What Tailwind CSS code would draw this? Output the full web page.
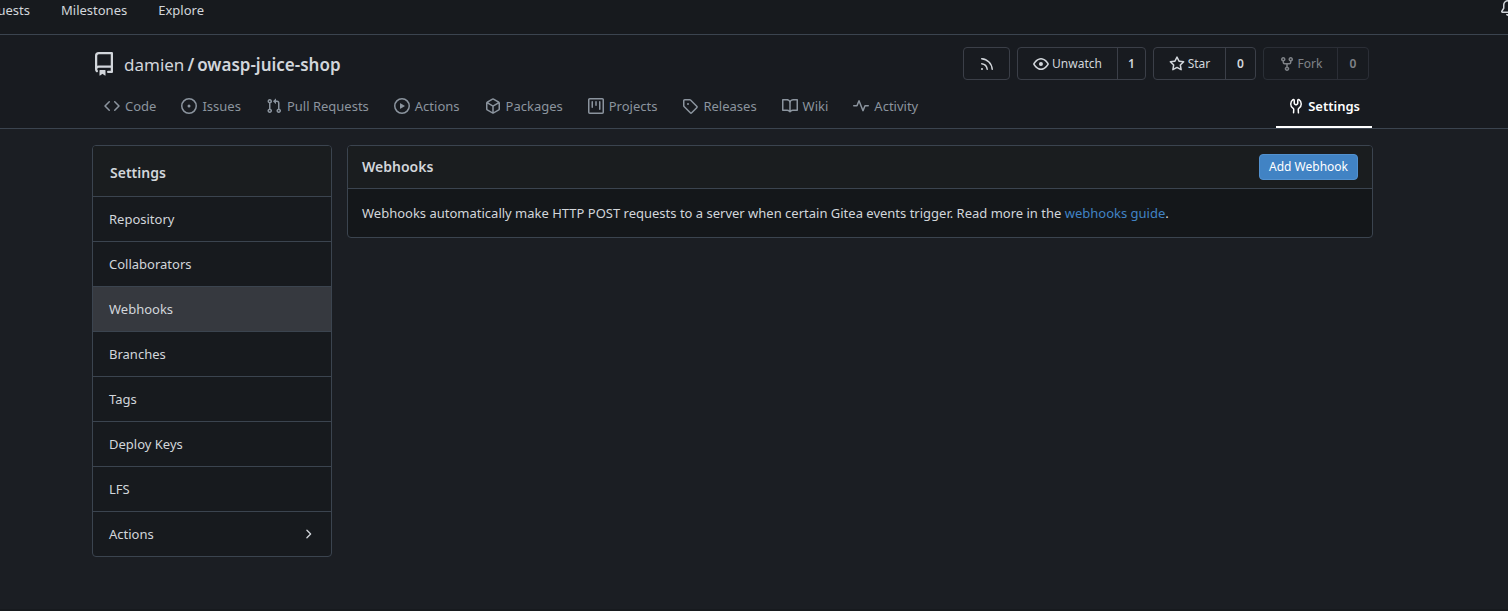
<!DOCTYPE html>
<html lang="en">
<head>
  <meta charset="UTF-8">
  <title>Webhooks - damien/owasp-juice-shop - Gitea</title>
  <meta name="viewport" content="width=device-width, initial-scale=1.0" />
  <script src="https://cdn.jsdelivr.net/npm/@tailwindcss/browser@4"></script>
</head>
<body class="min-h-screen flex flex-col overflow-x-hidden bg-[#1b1e23] text-[#d2d6db] text-[13px] leading-5 font-['Noto_Sans',sans-serif]">

  <!-- Top bar -->
  <nav class="flex justify-between h-[35px] bg-[#171a1e] border-b border-[#3b444f]">
    <div class="flex gap-[31px]">
      <a href="#" class="flex justify-end w-[30px] overflow-hidden whitespace-nowrap">Pull Requests</a>
      <a href="#">Milestones</a>
      <a href="#">Explore</a>
    </div>
    <a href="#" aria-label="Notifications" class="w-2 overflow-hidden">
      <svg class="w-4 h-4 fill-current" viewBox="0 0 16 16"><path d="M8 16a2 2 0 0 0 1.985-1.75c.017-.137-.097-.25-.235-.25h-3.5c-.138 0-.252.113-.235.25A2 2 0 0 0 8 16ZM3 5a5 5 0 0 1 10 0v2.947c0 .05.015.098.042.139l1.703 2.555A1.519 1.519 0 0 1 13.482 13H2.518a1.516 1.516 0 0 1-1.263-2.36l1.703-2.554A.255.255 0 0 0 3 7.947Zm5-3.5A3.5 3.5 0 0 0 4.5 5v2.947c0 .346-.102.683-.294.97l-1.703 2.556a.017.017 0 0 0-.003.01l.001.006c0 .002.002.004.004.006l.006.004.007.001h10.964l.007-.001.006-.004.004-.006.001-.007a.017.017 0 0 0-.003-.01l-1.703-2.554a1.745 1.745 0 0 1-.294-.97V5A3.5 3.5 0 0 0 8 1.5Z"/></svg>
    </a>
  </nav>

  <!-- Repo header -->
  <header class="bg-[#181b20] border-b border-[#3b444f] pl-[92px] pr-[136px] pt-3">
    <div class="flex items-center justify-between pr-[3px]">
      <div class="flex items-center gap-2 text-[17px] leading-6">
        <svg class="w-6 h-6 fill-current" viewBox="0 0 16 16"><path d="M2 2.5A2.5 2.5 0 0 1 4.5 0h8.75a.75.75 0 0 1 .75.75v12.5a.75.75 0 0 1-.75.75h-2.5a.75.75 0 0 1 0-1.5h1.75v-2h-8a1 1 0 0 0-.714 1.7.75.75 0 1 1-1.072 1.05A2.495 2.495 0 0 1 2 11.5Zm10.5-1h-8a1 1 0 0 0-1 1v6.708A2.486 2.486 0 0 1 4.5 9h8ZM5 12.25a.25.25 0 0 1 .25-.25h3.5a.25.25 0 0 1 .25.25v3.25a.25.25 0 0 1-.4.2l-1.45-1.087a.249.249 0 0 0-.3 0L5.4 15.7a.25.25 0 0 1-.4-.2Z"/></svg>
        <h1 class="flex gap-[3px] pt-[2px]"><a href="#">damien</a><span class="font-semibold">/</span><a href="#" class="font-semibold">owasp-juice-shop</a></h1>
      </div>
      <div class="flex gap-[7px] text-xs">
        <button aria-label="RSS feed" class="flex items-center justify-center w-[47px] h-[33px] border border-[#3b3f48] rounded">
          <svg class="w-4 h-4 fill-current" viewBox="0 0 16 16"><path d="M2.002 2.725a.75.75 0 0 1 .797-.699C8.79 2.42 13.58 7.21 13.974 13.201a.75.75 0 0 1-1.497.098 10.502 10.502 0 0 0-9.776-9.776.747.747 0 0 1-.7-.798ZM2.84 7.05h-.002a7.002 7.002 0 0 1 6.113 6.111.75.75 0 0 1-1.49.178 5.503 5.503 0 0 0-4.8-4.8.75.75 0 0 1 .179-1.489ZM2 13a1 1 0 1 1 2 0 1 1 0 0 1-2 0Z"/></svg>
        </button>
        <div class="flex h-[33px] border border-[#3b3f48] rounded">
          <button class="flex items-center justify-center gap-[3px] w-[99px]">
            <svg class="w-4 h-4 fill-current" viewBox="0 0 16 16"><path d="M8 2c1.981 0 3.671.992 4.933 2.078 1.27 1.091 2.187 2.345 2.637 3.023a1.62 1.62 0 0 1 0 1.798c-.45.678-1.367 1.932-2.637 3.023C11.67 13.008 9.981 14 8 14c-1.981 0-3.671-.992-4.933-2.078C1.797 10.83.88 9.576.43 8.898a1.62 1.62 0 0 1 0-1.798c.45-.677 1.367-1.931 2.637-3.022C4.33 2.992 6.019 2 8 2ZM1.679 7.932a.12.12 0 0 0 0 .136c.411.622 1.241 1.75 2.366 2.717C5.176 11.758 6.527 12.5 8 12.5c1.473 0 2.825-.742 3.955-1.715 1.124-.967 1.954-2.096 2.366-2.717a.12.12 0 0 0 0-.136c-.412-.621-1.242-1.75-2.366-2.717C10.824 4.242 9.473 3.5 8 3.5c-1.473 0-2.825.742-3.955 1.715-1.124.967-1.954 2.096-2.366 2.717ZM8 10a2 2 0 1 1-.001-3.999A2 2 0 0 1 8 10Z"/></svg>
            Unwatch
          </button>
          <a href="#" class="flex items-center justify-center w-7 border-l border-[#3b3f48] font-semibold">1</a>
        </div>
        <div class="flex h-[33px] border border-[#3b3f48] rounded">
          <button class="flex items-center justify-center gap-[3px] w-[71px]">
            <svg class="w-4 h-4 fill-current" viewBox="0 0 16 16"><path d="M8 .25a.75.75 0 0 1 .673.418l1.882 3.815 4.21.612a.75.75 0 0 1 .416 1.279l-3.046 2.97.719 4.192a.751.751 0 0 1-1.088.791L8 12.347l-3.766 1.98a.75.75 0 0 1-1.088-.79l.72-4.194L.818 6.374a.75.75 0 0 1 .416-1.28l4.21-.611L7.327.668A.75.75 0 0 1 8 .25Zm0 2.445L6.615 5.5a.75.75 0 0 1-.564.41l-3.097.45 2.24 2.184a.75.75 0 0 1 .216.664l-.528 3.084 2.769-1.456a.75.75 0 0 1 .698 0l2.77 1.456-.53-3.084a.75.75 0 0 1 .216-.664l2.24-2.183-3.096-.45a.75.75 0 0 1-.564-.41L8 2.694Z"/></svg>
            Star
          </button>
          <a href="#" class="flex items-center justify-center w-[30px] border-l border-[#3b3f48] font-semibold">0</a>
        </div>
        <div class="flex h-[33px] border border-[#3b3f48] rounded opacity-55">
          <button disabled class="flex items-center justify-center gap-[3px] w-[73px]">
            <svg class="w-4 h-4 fill-current" viewBox="0 0 16 16"><path d="M5 5.372v.878c0 .414.336.75.75.75h4.5a.75.75 0 0 0 .75-.75v-.878a2.25 2.25 0 1 1 1.5 0v.878a2.25 2.25 0 0 1-2.25 2.25h-1.5v2.128a2.251 2.251 0 1 1-1.5 0V8.5h-1.5A2.25 2.25 0 0 1 3.5 6.25v-.878a2.25 2.25 0 1 1 1.5 0ZM5 3.25a.75.75 0 1 0-1.5 0 .75.75 0 0 0 1.5 0Zm6.75.75a.75.75 0 1 0 0-1.5.75.75 0 0 0 0 1.5Zm-3 8.75a.75.75 0 1 0-1.5 0 .75.75 0 0 0 1.5 0Z"/></svg>
            Fork
          </button>
          <a href="#" class="flex items-center justify-center w-[31px] border-l border-[#3b3f48] font-semibold">0</a>
        </div>
      </div>
    </div>

    <div class="flex justify-between mt-1 text-[#8b949e]">
      <div class="flex gap-px">
        <a href="#" class="flex items-center gap-[5px] h-11 px-3">
          <svg class="w-4 h-4 fill-current" viewBox="0 0 16 16"><path d="m11.28 3.22 4.25 4.25a.75.75 0 0 1 0 1.06l-4.25 4.25a.749.749 0 0 1-1.275-.326.749.749 0 0 1 .215-.734L13.94 8l-3.72-3.72a.749.749 0 0 1 .326-1.275.749.749 0 0 1 .734.215Zm-6.56 0a.751.751 0 0 1 1.042.018.751.751 0 0 1 .018 1.042L2.06 8l3.72 3.72a.749.749 0 0 1-.326 1.275.749.749 0 0 1-.734-.215L.47 8.53a.75.75 0 0 1 0-1.06Z"/></svg>
          Code
        </a>
        <a href="#" class="flex items-center gap-[5px] h-11 px-3">
          <svg class="w-4 h-4 fill-current" viewBox="0 0 16 16"><path d="M8 9.5a1.5 1.5 0 1 0 0-3 1.5 1.5 0 0 0 0 3Z"/><path d="M8 0a8 8 0 1 1 0 16A8 8 0 0 1 8 0ZM1.5 8a6.5 6.5 0 1 0 13 0 6.5 6.5 0 0 0-13 0Z"/></svg>
          Issues
        </a>
        <a href="#" class="flex items-center gap-[5px] h-11 px-3">
          <svg class="w-4 h-4 fill-current" viewBox="0 0 16 16"><path d="M1.5 3.25a2.25 2.25 0 1 1 3 2.122v5.256a2.251 2.251 0 1 1-1.5 0V5.372A2.25 2.25 0 0 1 1.5 3.25Zm5.677-.177L9.573.677A.25.25 0 0 1 10 .854V2.5h1A2.5 2.5 0 0 1 13.5 5v5.628a2.251 2.251 0 1 1-1.5 0V5a1 1 0 0 0-1-1h-1v1.646a.25.25 0 0 1-.427.177L7.177 3.427a.25.25 0 0 1 0-.354ZM3.75 2.5a.75.75 0 1 0 0 1.5.75.75 0 0 0 0-1.5Zm0 9.5a.75.75 0 1 0 0 1.5.75.75 0 0 0 0-1.5Zm8.25.75a.75.75 0 1 0 1.5 0 .75.75 0 0 0-1.5 0Z"/></svg>
          Pull Requests
        </a>
        <a href="#" class="flex items-center gap-[5px] h-11 px-3">
          <svg class="w-4 h-4 fill-current" viewBox="0 0 16 16"><path d="M8 0a8 8 0 1 1 0 16A8 8 0 0 1 8 0ZM1.5 8a6.5 6.5 0 1 0 13 0 6.5 6.5 0 0 0-13 0Zm4.879-2.773 4.264 2.559a.25.25 0 0 1 0 .428l-4.264 2.559A.25.25 0 0 1 6 10.559V5.442a.25.25 0 0 1 .379-.215Z"/></svg>
          Actions
        </a>
        <a href="#" class="flex items-center gap-[5px] h-11 px-3">
          <svg class="w-4 h-4 fill-current" viewBox="0 0 16 16"><path d="m8.878.392 5.25 3.045c.54.314.872.89.872 1.514v6.098a1.75 1.75 0 0 1-.872 1.514l-5.25 3.045a1.75 1.75 0 0 1-1.756 0l-5.25-3.045A1.75 1.75 0 0 1 1 11.049V4.951c0-.624.332-1.201.872-1.514L7.122.392a1.75 1.75 0 0 1 1.756 0ZM7.875 1.69l-4.63 2.685L8 7.133l4.755-2.758-4.63-2.685a.248.248 0 0 0-.25 0ZM2.5 5.677v5.372c0 .09.047.171.125.216l4.625 2.683V8.432Zm6.25 8.271 4.625-2.683a.25.25 0 0 0 .125-.216V5.677L8.75 8.432Z"/></svg>
          Packages
        </a>
        <a href="#" class="flex items-center gap-[5px] h-11 px-3">
          <svg class="w-4 h-4 fill-current" viewBox="0 0 16 16"><path d="M1.75 0h12.5C15.216 0 16 .784 16 1.75v12.5A1.75 1.75 0 0 1 14.25 16H1.75A1.75 1.75 0 0 1 0 14.25V1.75C0 .784.784 0 1.75 0ZM1.5 1.75v12.5c0 .138.112.25.25.25h12.5a.25.25 0 0 0 .25-.25V1.75a.25.25 0 0 0-.25-.25H1.75a.25.25 0 0 0-.25.25ZM11.75 3a.75.75 0 0 1 .75.75v7.5a.75.75 0 0 1-1.5 0v-7.5a.75.75 0 0 1 .75-.75Zm-8.25.75a.75.75 0 0 1 1.5 0v5.5a.75.75 0 0 1-1.5 0ZM8 3a.75.75 0 0 1 .75.75v3.5a.75.75 0 0 1-1.5 0v-3.5A.75.75 0 0 1 8 3Z"/></svg>
          Projects
        </a>
        <a href="#" class="flex items-center gap-[5px] h-11 px-3">
          <svg class="w-4 h-4 fill-current" viewBox="0 0 16 16"><path d="M1 7.775V2.75C1 1.784 1.784 1 2.75 1h5.025c.464 0 .91.184 1.238.513l6.25 6.25a1.75 1.75 0 0 1 0 2.474l-5.026 5.026a1.75 1.75 0 0 1-2.474 0l-6.25-6.25A1.752 1.752 0 0 1 1 7.775Zm1.5 0c0 .066.026.13.073.177l6.25 6.25a.25.25 0 0 0 .354 0l5.025-5.025a.25.25 0 0 0 0-.354l-6.25-6.25a.25.25 0 0 0-.177-.073H2.75a.25.25 0 0 0-.25.25ZM6 5a1 1 0 1 1 0 2 1 1 0 0 1 0-2Z"/></svg>
          Releases
        </a>
        <a href="#" class="flex items-center gap-[5px] h-11 px-3">
          <svg class="w-4 h-4 fill-current" viewBox="0 0 16 16"><path d="M0 1.75A.75.75 0 0 1 .75 1h4.253c1.227 0 2.317.59 3 1.501A3.743 3.743 0 0 1 11.006 1h4.245a.75.75 0 0 1 .75.75v10.5a.75.75 0 0 1-.75.75h-4.507a2.25 2.25 0 0 0-1.591.659l-.622.621a.75.75 0 0 1-1.06 0l-.622-.621A2.25 2.25 0 0 0 5.258 13H.75a.75.75 0 0 1-.75-.75Zm7.251 10.324.004-5.073-.002-2.253A2.25 2.25 0 0 0 5.003 2.5H1.5v9h3.757a3.75 3.75 0 0 1 1.994.574ZM8.755 4.75l-.004 7.322a3.752 3.752 0 0 1 1.992-.572H14.5v-9h-3.495a2.25 2.25 0 0 0-2.25 2.25Z"/></svg>
          Wiki
        </a>
        <a href="#" class="flex items-center gap-[5px] h-11 px-3">
          <svg class="w-4 h-4 fill-current" viewBox="0 0 16 16"><path d="M6 2c.306 0 .582.187.696.471L10 10.731l1.304-3.26A.751.751 0 0 1 12 7h3.25a.75.75 0 0 1 0 1.5h-2.742l-1.812 4.528a.751.751 0 0 1-1.392 0L6 4.77 4.696 8.03A.75.75 0 0 1 4 8.5H.75a.75.75 0 0 1 0-1.5h2.742l1.812-4.529A.751.751 0 0 1 6 2Z"/></svg>
          Activity
        </a>
      </div>
      <a href="#" class="flex items-center gap-1 h-11 px-3 pt-[2px] border-b-2 border-white text-white font-semibold">
        <svg class="w-4 h-4 fill-current" viewBox="0 0 16 16"><path d="M5.433 2.304A4.492 4.492 0 0 0 3.5 6c0 1.598.832 3.002 2.09 3.802.518.328.929.923.902 1.64v.008l-.164 3.337a.75.75 0 1 1-1.498-.073l.163-3.33c.002-.085-.05-.216-.207-.316A5.996 5.996 0 0 1 2 6a5.993 5.993 0 0 1 2.567-4.92 1.482 1.482 0 0 1 1.673-.04c.462.296.76.827.76 1.423v2.82c0 .082.041.16.11.206l.75.51a.25.25 0 0 0 .28 0l.75-.51A.249.249 0 0 0 9 5.282V2.463c0-.596.298-1.127.76-1.423a1.482 1.482 0 0 1 1.673.04A5.993 5.993 0 0 1 14 6a5.996 5.996 0 0 1-2.786 5.068c-.157.1-.209.23-.207.315l.163 3.33a.752.752 0 0 1-1.094.714.75.75 0 0 1-.404-.64l-.164-3.345c-.027-.717.384-1.312.902-1.64A4.495 4.495 0 0 0 12.5 6a4.492 4.492 0 0 0-1.933-3.696c-.024.017-.067.067-.067.16v2.818a1.75 1.75 0 0 1-.767 1.448l-.75.51a1.75 1.75 0 0 1-1.966 0l-.75-.51A1.75 1.75 0 0 1 5.5 5.282V2.463c0-.092-.043-.142-.067-.159Z"/></svg>
        Settings
      </a>
    </div>
  </header>

  <main class="grow flex items-start gap-[15px] pl-[92px] pr-[135px] pt-4 pb-4">
    <!-- Settings menu -->
    <aside class="w-60 shrink-0 border border-[#3b444f] rounded bg-[#171a1e] overflow-hidden">
      <h2 class="flex items-center h-[50px] px-[17px] pt-1 bg-[#1a1d1f] text-sm font-semibold">Settings</h2>
      <a href="#" class="flex items-center h-[45px] px-4 border-t border-[#3b444f]">Repository</a>
      <a href="#" class="flex items-center h-[45px] px-4 border-t border-[#3b444f]">Collaborators</a>
      <a href="#" class="flex items-center h-[45px] px-4 border-t border-[#3b444f] bg-[#36393f]">Webhooks</a>
      <a href="#" class="flex items-center h-[45px] px-4 border-t border-[#3b444f]">Branches</a>
      <a href="#" class="flex items-center h-[45px] px-4 border-t border-[#3b444f]">Tags</a>
      <a href="#" class="flex items-center h-[45px] px-4 border-t border-[#3b444f]">Deploy Keys</a>
      <a href="#" class="flex items-center h-[45px] px-4 border-t border-[#3b444f]">LFS</a>
      <a href="#" class="flex items-center justify-between h-[45px] px-4 border-t border-[#3b444f]">
        Actions
        <svg class="w-[14px] h-[14px] fill-current" viewBox="0 0 16 16"><path d="M6.22 3.22a.75.75 0 0 1 1.06 0l4.25 4.25a.75.75 0 0 1 0 1.06l-4.25 4.25a.751.751 0 0 1-1.042-.018.751.751 0 0 1-.018-1.042L9.94 8 6.22 4.28a.75.75 0 0 1 0-1.06Z"/></svg>
      </a>
    </aside>

    <!-- Webhooks -->
    <section class="grow border border-[#3b444f] rounded bg-[#14171a] overflow-hidden">
      <div class="flex items-center justify-between h-[43px] px-[14px] border-b border-[#3b444f] bg-[#1a1d1f]">
        <h2 class="text-sm font-semibold">Webhooks</h2>
        <button class="h-[26px] px-[9px] border border-[#5291cf] rounded bg-[#4183c4] text-white text-xs">Add Webhook</button>
      </div>
      <p class="p-[14px]">Webhooks automatically make HTTP POST requests to a server when certain Gitea events trigger. Read more in the <a href="#" class="text-[#4183c4]">webhooks guide</a>.</p>
    </section>
  </main>

  <footer class="h-[2px] bg-[#171a1e]"></footer>

</body>
</html>
